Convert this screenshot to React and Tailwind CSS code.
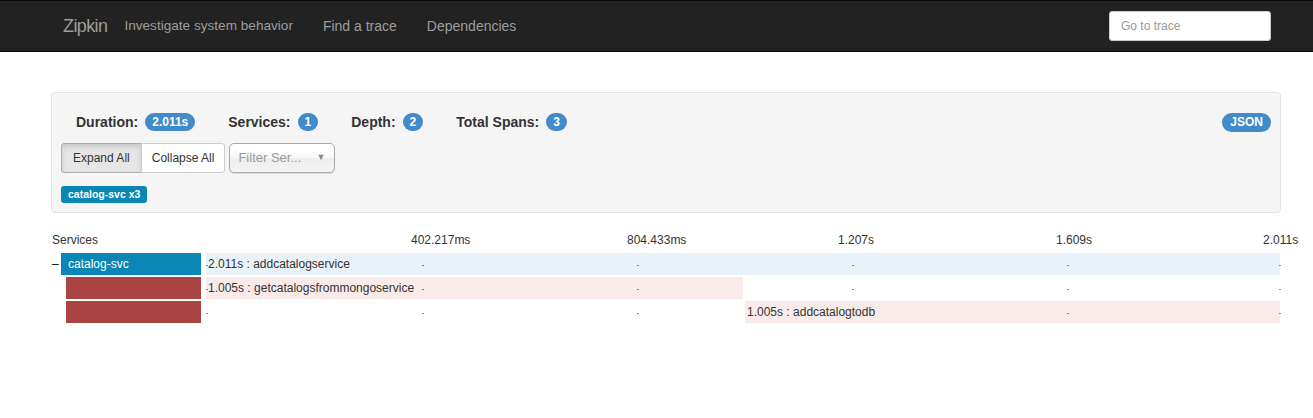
export default function App() {
  const ticks = [0, 216, 431, 646, 861, 1073];
  const labels = [
    { t: "402.217ms", l: "left-[359px]" },
    { t: "804.433ms", l: "left-[575px]" },
    { t: "1.207s", l: "left-[786px]" },
    { t: "1.609s", l: "left-[1004px]" },
    { t: "2.011s", l: "left-[1211px]" },
  ];
  const Badge = ({ children }) => (
    <span className="inline-flex h-[18px] items-center rounded-full bg-[#428bca] px-[7px] text-[12px] font-bold leading-none text-white">
      {children}
    </span>
  );
  const Stat = ({ label, value }) => (
    <div className="flex items-center gap-[7px]">
      <span className="text-[14px] font-bold text-[#333]">{label}</span>
      <Badge>{value}</Badge>
    </div>
  );
  const Ticks = () => (
    <>
      {ticks.map((x, i) => (
        <span
          key={i}
          className="absolute top-[12px] h-px w-[2px] bg-[#8a8a8a]"
          style={{ left: x }}
        />
      ))}
    </>
  );
  return (
    <div className="min-h-[418px] bg-white font-['Liberation_Sans',Arial,sans-serif] text-[#333]">
      <nav className="flex h-[52px] items-center border-y border-[#080808] bg-[#222]">
        <div className="flex w-full items-center pl-[63px]">
          <span className="text-[18px] tracking-[-0.6px] text-[#9d9d9d]">Zipkin</span>
          <span className="ml-[17px] text-[13.6px] text-[#9d9d9d]">Investigate system behavior</span>
          <span className="ml-[30px] text-[14px] text-[#9d9d9d]">Find a trace</span>
          <span className="ml-[30px] text-[14px] text-[#9d9d9d]">Dependencies</span>
          <input
            placeholder="Go to trace"
            className="ml-auto mr-[42px] h-[30px] w-[162px] rounded-[3px] border border-[#ccc] bg-white px-[11px] text-[12px] text-[#555] placeholder:text-[#999] outline-none"
          />
        </div>
      </nav>

      <div className="ml-[51px] mt-[40px] w-[1230px] rounded-[4px] border border-[#e3e3e3] bg-[#f5f5f5] px-[9px] pb-[9px] pt-[19px]">
        <div className="flex h-[20px] items-center pl-[15px]">
          <div className="flex items-center gap-[33px]">
            <Stat label="Duration:" value="2.011s" />
            <Stat label="Services:" value="1" />
            <Stat label="Depth:" value="2" />
            <Stat label="Total Spans:" value="3" />
          </div>
          <span className="ml-auto inline-flex h-[19px] items-center rounded-full bg-[#428bca] px-[8px] text-[12px] font-bold leading-none text-white">
            JSON
          </span>
        </div>
        <div className="mt-[11px] flex h-[30px] items-center">
          <button className="h-[30px] rounded-l-[3px] border border-[#adadad] bg-[#e6e6e6] px-[11px] text-[12px] text-[#333] shadow-[inset_0_3px_5px_rgba(0,0,0,0.125)]">
            Expand All
          </button>
          <button className="-ml-px h-[30px] rounded-r-[3px] border border-[#ccc] bg-white px-[10px] text-[12px] text-[#333]">
            Collapse All
          </button>
          <div className="ml-[4px] flex h-[30px] w-[106px] items-center rounded-[5px] border border-[#aaa] bg-[linear-gradient(#fff_20%,#f6f6f6_50%,#eee_52%,#f4f4f4_100%)] pl-[8px] pr-[9px] shadow-[0_1px_1px_rgba(0,0,0,0.1)]">
            <span className="text-[13px] text-[#999]">Filter Ser...</span>
            <span className="ml-auto text-[9px] text-[#888]">▼</span>
          </div>
        </div>
        <div className="mt-[13px] flex">
          <span className="inline-flex h-[17px] items-center rounded-[3px] bg-[#0a87b5] px-[7px] text-[10.5px] font-bold leading-none text-white">
            catalog-svc x3
          </span>
        </div>
      </div>

      <div className="ml-[52px] mt-[20px] w-[1248px]">
        <div className="relative h-[15px] text-[12px] leading-[15px] text-[#333]">
          <span>Services</span>
          {labels.map((l) => (
            <span key={l.t} className={`absolute top-0 ${l.l}`}>
              {l.t}
            </span>
          ))}
        </div>
        <div className="mt-[5px] flex flex-col gap-[2px] text-[12px] text-[#333]">
          <div className="flex h-[22px] items-center">
            <span className="w-[9px] leading-[22px] text-black">–</span>
            <div className="h-[22px] w-[140px] bg-[#0a87b5] pl-[7px] leading-[22px] text-white">catalog-svc</div>
            <div className="relative ml-[5px] flex h-[22px] w-[1074px]">
              <div className="h-full w-[1074px] whitespace-nowrap bg-[#eaf2f9] pl-[2px] leading-[22px]">
                2.011s : addcatalogservice
              </div>
              <Ticks />
            </div>
          </div>
          <div className="flex h-[22px] items-center pl-[14px]">
            <div className="h-[22px] w-[135px] bg-[#a94442]" />
            <div className="relative ml-[5px] flex h-[22px] w-[1074px]">
              <div className="h-full w-[537px] whitespace-nowrap bg-[#f9ebea] pl-[2px] leading-[22px]">
                1.005s : getcatalogsfrommongoservice
              </div>
              <Ticks />
            </div>
          </div>
          <div className="flex h-[22px] items-center pl-[14px]">
            <div className="h-[22px] w-[135px] bg-[#a94442]" />
            <div className="relative ml-[5px] flex h-[22px] w-[1074px]">
              <div className="ml-[539px] h-full w-[535px] whitespace-nowrap bg-[#f9ebea] pl-[2px] leading-[22px]">
                1.005s : addcatalogtodb
              </div>
              <Ticks />
            </div>
          </div>
        </div>
      </div>
    </div>
  );
}
